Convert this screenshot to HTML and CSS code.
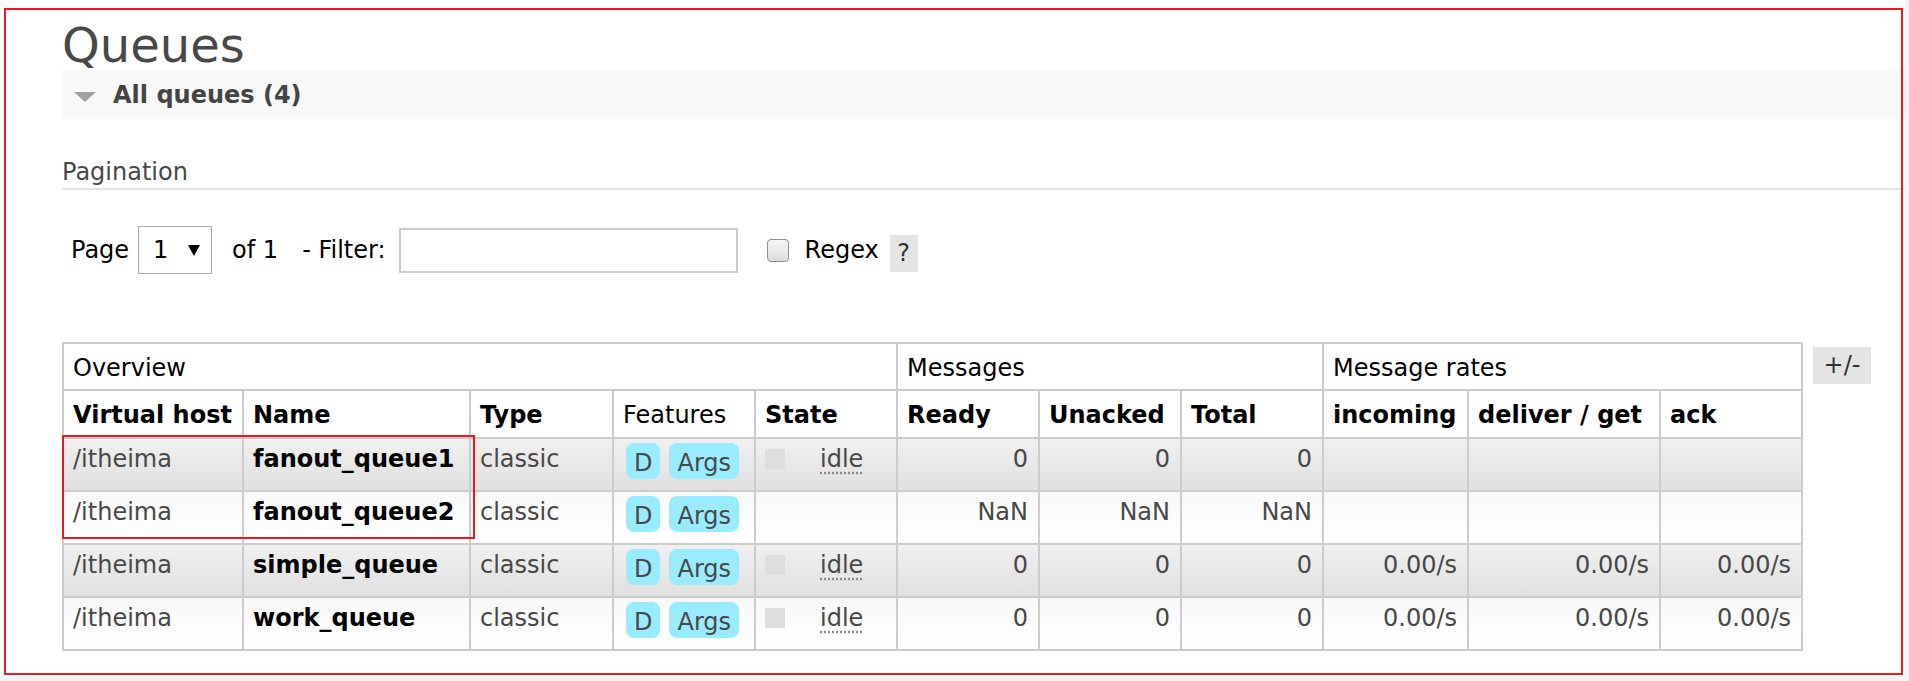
FILE: index.html
```html
<!DOCTYPE html>
<html lang="en">
<head>
<meta charset="utf-8">
<title>Queues</title>
<link rel="stylesheet" href="styles.css">
</head>
<body>
<div class="page">
  <main class="content">
    <h1 class="title">Queues</h1>
    <div class="section-bar">
      <span class="tri"></span>
      <span class="section-title">All queues (4)</span>
    </div>
    <h3 class="subhead">Pagination</h3>
    <div class="pager">
      <span>Page</span>
      <div class="select"><span>1</span><svg class="caret" width="12" height="11" viewBox="0 0 12 11"><polygon points="0,0 12,0 6,11" fill="#000"/></svg></div>
      <span class="of">of 1</span>
      <span class="filter-label">- Filter:</span>
      <div class="input"></div>
      <span class="checkbox"></span>
      <span class="regex">Regex</span>
      <span class="help">?</span>
    </div>
    <div class="table-wrap">
      <table class="queues">
        <colgroup>
          <col class="c-vh"><col class="c-name"><col class="c-type"><col class="c-std"><col class="c-std">
          <col class="c-std"><col class="c-std"><col class="c-std"><col class="c-inc"><col class="c-del"><col class="c-std">
        </colgroup>
        <thead>
          <tr class="group">
            <th colspan="5">Overview</th>
            <th colspan="3">Messages</th>
            <th colspan="3">Message rates</th>
          </tr>
          <tr class="sub">
            <th>Virtual host</th>
            <th>Name</th>
            <th>Type</th>
            <th class="plain">Features</th>
            <th>State</th>
            <th>Ready</th>
            <th>Unacked</th>
            <th>Total</th>
            <th>incoming</th>
            <th>deliver / get</th>
            <th>ack</th>
          </tr>
        </thead>
        <tbody>
          <tr class="alt1">
            <td>/itheima</td>
            <td class="qname">fanout_queue1</td>
            <td>classic</td>
            <td class="features"><div class="tags"><span class="tag">D</span><span class="tag">Args</span></div></td>
            <td><div class="state"><span class="sq"></span><span class="idle">idle</span></div></td>
            <td class="num">0</td>
            <td class="num">0</td>
            <td class="num">0</td>
            <td class="num"></td>
            <td class="num"></td>
            <td class="num"></td>
          </tr>
          <tr class="alt2">
            <td>/itheima</td>
            <td class="qname">fanout_queue2</td>
            <td>classic</td>
            <td class="features"><div class="tags"><span class="tag">D</span><span class="tag">Args</span></div></td>
            <td></td>
            <td class="num">NaN</td>
            <td class="num">NaN</td>
            <td class="num">NaN</td>
            <td class="num"></td>
            <td class="num"></td>
            <td class="num"></td>
          </tr>
          <tr class="alt1">
            <td>/itheima</td>
            <td class="qname">simple_queue</td>
            <td>classic</td>
            <td class="features"><div class="tags"><span class="tag">D</span><span class="tag">Args</span></div></td>
            <td><div class="state"><span class="sq"></span><span class="idle">idle</span></div></td>
            <td class="num">0</td>
            <td class="num">0</td>
            <td class="num">0</td>
            <td class="num">0.00/s</td>
            <td class="num">0.00/s</td>
            <td class="num">0.00/s</td>
          </tr>
          <tr class="alt2">
            <td>/itheima</td>
            <td class="qname">work_queue</td>
            <td>classic</td>
            <td class="features"><div class="tags"><span class="tag">D</span><span class="tag">Args</span></div></td>
            <td><div class="state"><span class="sq"></span><span class="idle">idle</span></div></td>
            <td class="num">0</td>
            <td class="num">0</td>
            <td class="num">0</td>
            <td class="num">0.00/s</td>
            <td class="num">0.00/s</td>
            <td class="num">0.00/s</td>
          </tr>
        </tbody>
      </table>
      <span class="toggle">+/-</span>
    </div>
  </main>
  <div class="annot annot-page"></div>
  <div class="annot annot-rows"></div>
</div>
</body>
</html>
```

FILE: styles.css
```css
html {
  background: #f4f4f4;
}

body {
  margin: 0;
  font-family: "DejaVu Sans", Verdana, sans-serif;
  font-size: 24px;
  color: #000;
}

.page {
  position: relative;
  width: 1905px;
  height: 677px;
  background: #fff;
  overflow: hidden;
}

.content {
  padding: 20px 0 0 62px;
}

.title {
  margin: 0;
  font-size: 48px;
  line-height: 50px;
  font-weight: normal;
  color: #484848;
}

.section-bar {
  display: flex;
  align-items: flex-start;
  height: 49px;
  background: #f8f8f8;
  padding-left: 12px;
}

.tri {
  width: 0;
  height: 0;
  margin-top: 22px;
  border-left: 11px solid transparent;
  border-right: 11px solid transparent;
  border-top: 10px solid #a0a0a0;
}

.section-title {
  margin-left: 17px;
  padding-top: 2px;
  line-height: 47px;
  font-size: 24px;
  font-weight: bold;
  color: #444;
}

.subhead {
  margin: 39px 0 0;
  font-size: 24px;
  font-weight: normal;
  line-height: 28px;
  padding-bottom: 2px;
  border-bottom: 2px solid #e4e4e4;
  color: #484848;
}

.pager {
  display: flex;
  align-items: center;
  height: 48px;
  margin-top: 36px;
  padding-left: 9px;
}

.select {
  display: flex;
  align-items: center;
  box-sizing: border-box;
  width: 74px;
  height: 48px;
  margin-left: 9px;
  padding-left: 14px;
  border: 1px solid #a9a9a9;
}

.caret {
  margin-left: 20px;
}

.of {
  margin-left: 20px;
}

.filter-label {
  margin-left: 24px;
}

.input {
  box-sizing: border-box;
  width: 339px;
  height: 45px;
  margin-left: 13px;
  border: 2px solid #ccc;
}

.checkbox {
  box-sizing: border-box;
  width: 22px;
  height: 23px;
  margin-left: 29px;
  border: 1px solid #909090;
  border-radius: 4px;
  background: linear-gradient(#f6f6f6, #dcdcdc);
}

.regex {
  margin-left: 16px;
}

.help {
  width: 28px;
  height: 37px;
  margin-left: 11px;
  margin-top: 7px;
  background: #e4e4e4;
  text-align: center;
  line-height: 37px;
  color: #333;
}

.table-wrap {
  display: flex;
  align-items: flex-start;
  margin-top: 68px;
}

.queues {
  border-collapse: separate;
  border-spacing: 0;
  table-layout: fixed;
  width: 1741px;
  border-left: 2px solid #ccc;
  border-top: 2px solid #ccc;
}

.c-vh { width: 180px; }
.c-name { width: 227px; }
.c-type { width: 143px; }
.c-std { width: 142px; }
.c-inc { width: 145px; }
.c-del { width: 192px; }

.queues th,
.queues td {
  box-sizing: border-box;
  border-right: 2px solid #ccc;
  border-bottom: 2px solid #ccc;
  padding: 4px 10px 15px 9px;
  line-height: 32px;
  vertical-align: top;
  text-align: left;
  white-space: nowrap;
  overflow: hidden;
}

.queues th {
  background: #fff;
  color: #000;
}

.queues tr.group th {
  font-weight: normal;
  padding: 8px 10px 5px 9px;
}

.queues tr.sub th {
  font-weight: bold;
  padding: 8px 10px 6px 9px;
}

.queues tr.sub th.plain {
  font-weight: normal;
}

.queues td {
  color: #484848;
}

.queues tr.alt1 td {
  background: linear-gradient(#f0f0f0, #e0e0e0);
}

.queues tr.alt2 td {
  background: linear-gradient(#f8f8f8, #ffffff);
}

.queues td.qname {
  font-weight: bold;
  color: #000;
}

.queues td.num {
  text-align: right;
}

.queues td.features {
  padding-bottom: 11px;
}

.tags {
  display: flex;
  gap: 9px;
  margin-left: 3px;
  height: 36px;
}

.tag {
  display: inline-block;
  height: 36px;
  padding: 0 8px;
  line-height: 40px;
  border-radius: 8px;
  background: #99ebff;
  color: #484848;
}

.state {
  display: flex;
  align-items: flex-start;
}

.sq {
  width: 20px;
  height: 20px;
  margin-top: 6px;
  background: #dedede;
}

.idle {
  margin-left: 35px;
  text-decoration: underline dotted #888;
  text-underline-offset: 5px;
}

.toggle {
  width: 58px;
  height: 37px;
  margin-left: 10px;
  margin-top: 5px;
  background: #e4e4e4;
  text-align: center;
  line-height: 37px;
  color: #333;
}

.annot {
  position: absolute;
  box-sizing: border-box;
  border: 2px solid #e41b23;
  pointer-events: none;
}

.annot-page {
  left: 4px;
  top: 8px;
  width: 1899px;
  height: 667px;
}

.annot-rows {
  left: 62px;
  top: 435px;
  width: 413px;
  height: 104px;
}
```
